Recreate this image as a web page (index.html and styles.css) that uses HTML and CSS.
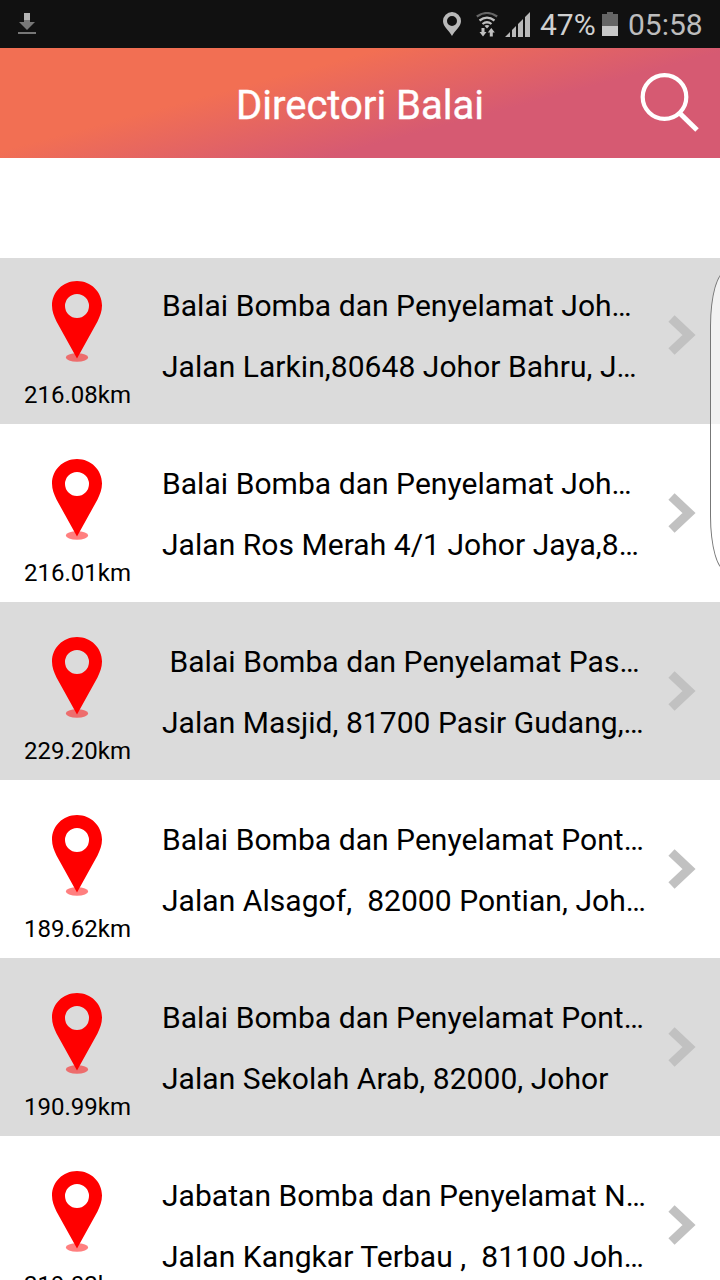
FILE: index.html
```html
<!DOCTYPE html>
<html lang="ms">
<head>
    <meta charset="UTF-8">
    <meta name="viewport" content="width=device-width, initial-scale=1.0">
    <title>Directori Balai</title>
    <link rel="stylesheet" href="styles.css">
</head>
<body>

    <svg class="defs" width="0" height="0">
        <symbol id="pin" viewBox="0 0 50 82">
            <ellipse cx="25" cy="76.500" rx="11.2" ry="4.2" fill="#f00" fill-opacity="0.5"/>
            <path fill="#f00" fill-rule="evenodd" d="M25 0C11 0 0 11 0 24.500c0 6 2 10.500 4.500 16L25 77.500l20.500-37C48 35 50 30.500 50 24.500 50 11 39 0 25 0zM25 13a12 12 0 1 1 0 24 12 12 0 0 1 0-24z"/>
        </symbol>
        <symbol id="arrow" viewBox="0 0 28 40">
            <path d="M3.500 3.500L21 20l-17.500 16.500" fill="none" stroke="#c1c1c1" stroke-width="9"/>
        </symbol>
    </svg>

    <div class="status">
        <svg class="download" width="18" height="22" viewBox="0 0 18 22">
            <path d="M6 0h6v7H6z" fill="#b4b4b4"/>
            <path d="M6 7h6v2h5L9 17 1 9h5z" fill="#777"/>
            <path d="M0 19h18v2H0z" fill="#777"/>
        </svg>
        <svg class="location" width="18" height="24" viewBox="0 0 18 24">
            <path fill="#b9b9b9" fill-rule="evenodd" d="M9 0a9 9 0 0 0-9 9c0 6 6 9 9 15 3-6 9-9 9-15a9 9 0 0 0-9-9zM9 4a5 5 0 1 1 0 10A5 5 0 0 1 9 4z"/>
        </svg>
        <svg class="wifi" width="22" height="25" viewBox="0 0 22 25">
            <g fill="none" stroke-width="2.200">
                <path d="M.8 4.500Q11-2.500 21.200 4.500" stroke="#666"/>
                <path d="M3.500 8.500Q11 2.800 18.500 8.500M6.500 12Q11 8.500 15.500 12" stroke="#c0c0c0"/>
            </g>
            <path d="M8.500 13.800Q11 12 13.500 13.800L11 16.500z" fill="#c0c0c0"/>
            <path d="M5.500 16h3v4h2L7 24.500 3.500 20h2zM13.800 24.500h3v-4h2L15.300 16l-3.500 4.500h2z" fill="#c0c0c0"/>
        </svg>
        <svg class="signal" width="26" height="25" viewBox="0 0 26 25">
            <path fill="#b9b9b9" d="M0 25l5-5v5zM7 18l4-4v11H7zM13 12l5-5v18h-5zM20 5l5-5v25h-5z"/>
        </svg>
        <span class="percent">47%</span>
        <svg class="battery" width="16" height="24" viewBox="0 0 16 24">
            <path d="M5 0h6v2h5v12H0V2h5z" fill="#666"/>
            <path d="M0 14h16v10H0z" fill="#c8c8c8"/>
        </svg>
        <span class="clock">05:58</span>
    </div>

    <div class="header">
        <h1>Directori Balai</h1>
        <svg class="search" width="60" height="60" viewBox="0 0 60 60" fill="none" stroke="#fff">
            <circle cx="24.500" cy="25" r="21.800" stroke-width="4.200"/>
            <path d="M39.500 41L57 58" stroke-width="5"/>
        </svg>
    </div>

    <div class="list">
        <div class="row">
            <div class="place">
                <svg class="pin"><use href="#pin"/></svg>
                <span class="km">216.08km</span>
            </div>
            <div class="info">
                <p class="name">Balai Bomba dan Penyelamat Joh…</p>
                <p class="address">Jalan Larkin,80648 Johor Bahru, J…</p>
            </div>
            <svg class="arrow"><use href="#arrow"/></svg>
        </div>
        <div class="row">
            <div class="place">
                <svg class="pin"><use href="#pin"/></svg>
                <span class="km">216.01km</span>
            </div>
            <div class="info">
                <p class="name">Balai Bomba dan Penyelamat Joh…</p>
                <p class="address">Jalan Ros Merah 4/1 Johor Jaya,8…</p>
            </div>
            <svg class="arrow"><use href="#arrow"/></svg>
        </div>
        <div class="row">
            <div class="place">
                <svg class="pin"><use href="#pin"/></svg>
                <span class="km">229.20km</span>
            </div>
            <div class="info">
                <p class="name"> Balai Bomba dan Penyelamat Pas…</p>
                <p class="address">Jalan Masjid, 81700 Pasir Gudang,…</p>
            </div>
            <svg class="arrow"><use href="#arrow"/></svg>
        </div>
        <div class="row">
            <div class="place">
                <svg class="pin"><use href="#pin"/></svg>
                <span class="km">189.62km</span>
            </div>
            <div class="info">
                <p class="name">Balai Bomba dan Penyelamat Pont…</p>
                <p class="address">Jalan Alsagof,  82000 Pontian, Joh…</p>
            </div>
            <svg class="arrow"><use href="#arrow"/></svg>
        </div>
        <div class="row">
            <div class="place">
                <svg class="pin"><use href="#pin"/></svg>
                <span class="km">190.99km</span>
            </div>
            <div class="info">
                <p class="name">Balai Bomba dan Penyelamat Pont…</p>
                <p class="address">Jalan Sekolah Arab, 82000, Johor</p>
            </div>
            <svg class="arrow"><use href="#arrow"/></svg>
        </div>
        <div class="row">
            <div class="place">
                <svg class="pin"><use href="#pin"/></svg>
                <span class="km">219.02km</span>
            </div>
            <div class="info">
                <p class="name">Jabatan Bomba dan Penyelamat N…</p>
                <p class="address">Jalan Kangkar Terbau ,  81100 Joh…</p>
            </div>
            <svg class="arrow"><use href="#arrow"/></svg>
        </div>
    </div>

    <!-- edge panel handle -->
    <div class="edge"></div>

</body>
</html>
```

FILE: styles.css
```css
* { box-sizing: border-box; margin: 0; padding: 0; }
body { position: relative; display: flex; flex-direction: column; height: 1280px; overflow: hidden; background: #fff; color: #000; font-family: Roboto, sans-serif; }
svg { display: block; flex: none; }
.defs { position: absolute; }

.status { display: flex; align-items: center; height: 48px; flex: none; padding: 0 17px 0 18px; background: #111; color: #bdbdbd; font-size: 30px; }
.download { margin-right: auto; }
.location { margin-right: 15px; }
.wifi { margin-right: 7px; }
.signal { margin-right: 9px; }
.percent { width: 56px; color: #d0d0d0; }
.battery { margin: 0 10px 0 6px; }
.clock { width: 75px; }
.percent, .clock { line-height: 48px; padding-top: 2px; white-space: nowrap; }

.header { display: grid; grid-template-columns: 81px 1fr 81px; align-items: center; height: 110px; flex: none; background: linear-gradient(165deg, #f26f53 34%, #d65a72 65%); }
.header h1 { grid-column: 2; padding-top: 5px; text-align: center; color: #fff; font-size: 40px; font-weight: 400; line-height: 48px; -webkit-text-stroke: 0.4px #fff; }
.search { margin: 0 0 2px 1px; }

.list { flex: 1; margin-top: 100px; overflow: hidden; }
.row { display: flex; height: 178px; background: #fff; }
.row:first-child { margin-top: -12px; }
.row:nth-child(odd) { background: #dbdbdb; }
.place { width: 162px; padding: 35px 8px 0 0; display: flex; flex-direction: column; align-items: center; flex: none; }
.pin { width: 50px; height: 82px; }
.km { margin: 17px 0 0 1px; font-size: 24px; line-height: 30px; }
.info { width: 506px; flex: none; padding-top: 40px; }
.info p { font-size: 30px; line-height: 40px; letter-spacing: 0.05px; white-space: pre; }
.info .address { margin-top: 21px; }
.arrow { width: 28px; height: 40px; margin-top: 69px; }

.edge { position: absolute; top: 271px; right: -22px; width: 32px; height: 300px; border: 1px solid #777; border-radius: 16px / 55px; background: rgba(255, 255, 255, 0.65); }
```
